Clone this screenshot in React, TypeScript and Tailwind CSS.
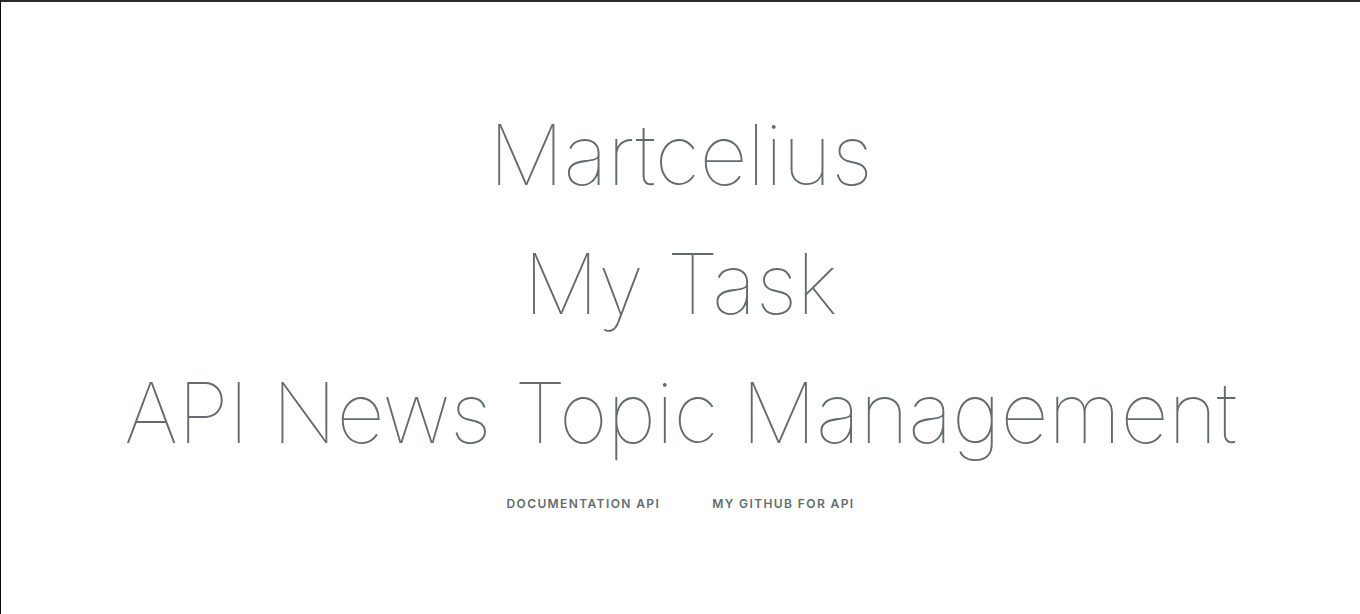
import React from "react";

export default function App() {
  return (
    <div className="h-[614px] w-[1360px] bg-white border-t-2 border-t-[#2b2b2b] border-l border-l-[#0b0f14] overflow-hidden text-[#636b6f] font-['Inter',sans-serif]">
      <div className="flex flex-col items-center pt-[88px]">
        <div className="text-[84px] font-thin leading-[129px] tracking-[-0.4px] whitespace-nowrap">Martcelius</div>
        <div className="text-[84px] font-thin leading-[129px] tracking-[-0.4px] whitespace-nowrap">My Task</div>
        <div className="text-[84px] font-thin leading-[129px] tracking-[-0.4px] whitespace-nowrap">API News Topic Management</div>
        <div className="mt-[19px] flex text-[12px] font-semibold leading-[16px] tracking-[1.4px] uppercase">
          <a className="px-[26px]" href="#">Documentation API</a>
          <a className="px-[26px]" href="#">My Github for API</a>
        </div>
      </div>
    </div>
  );
}
